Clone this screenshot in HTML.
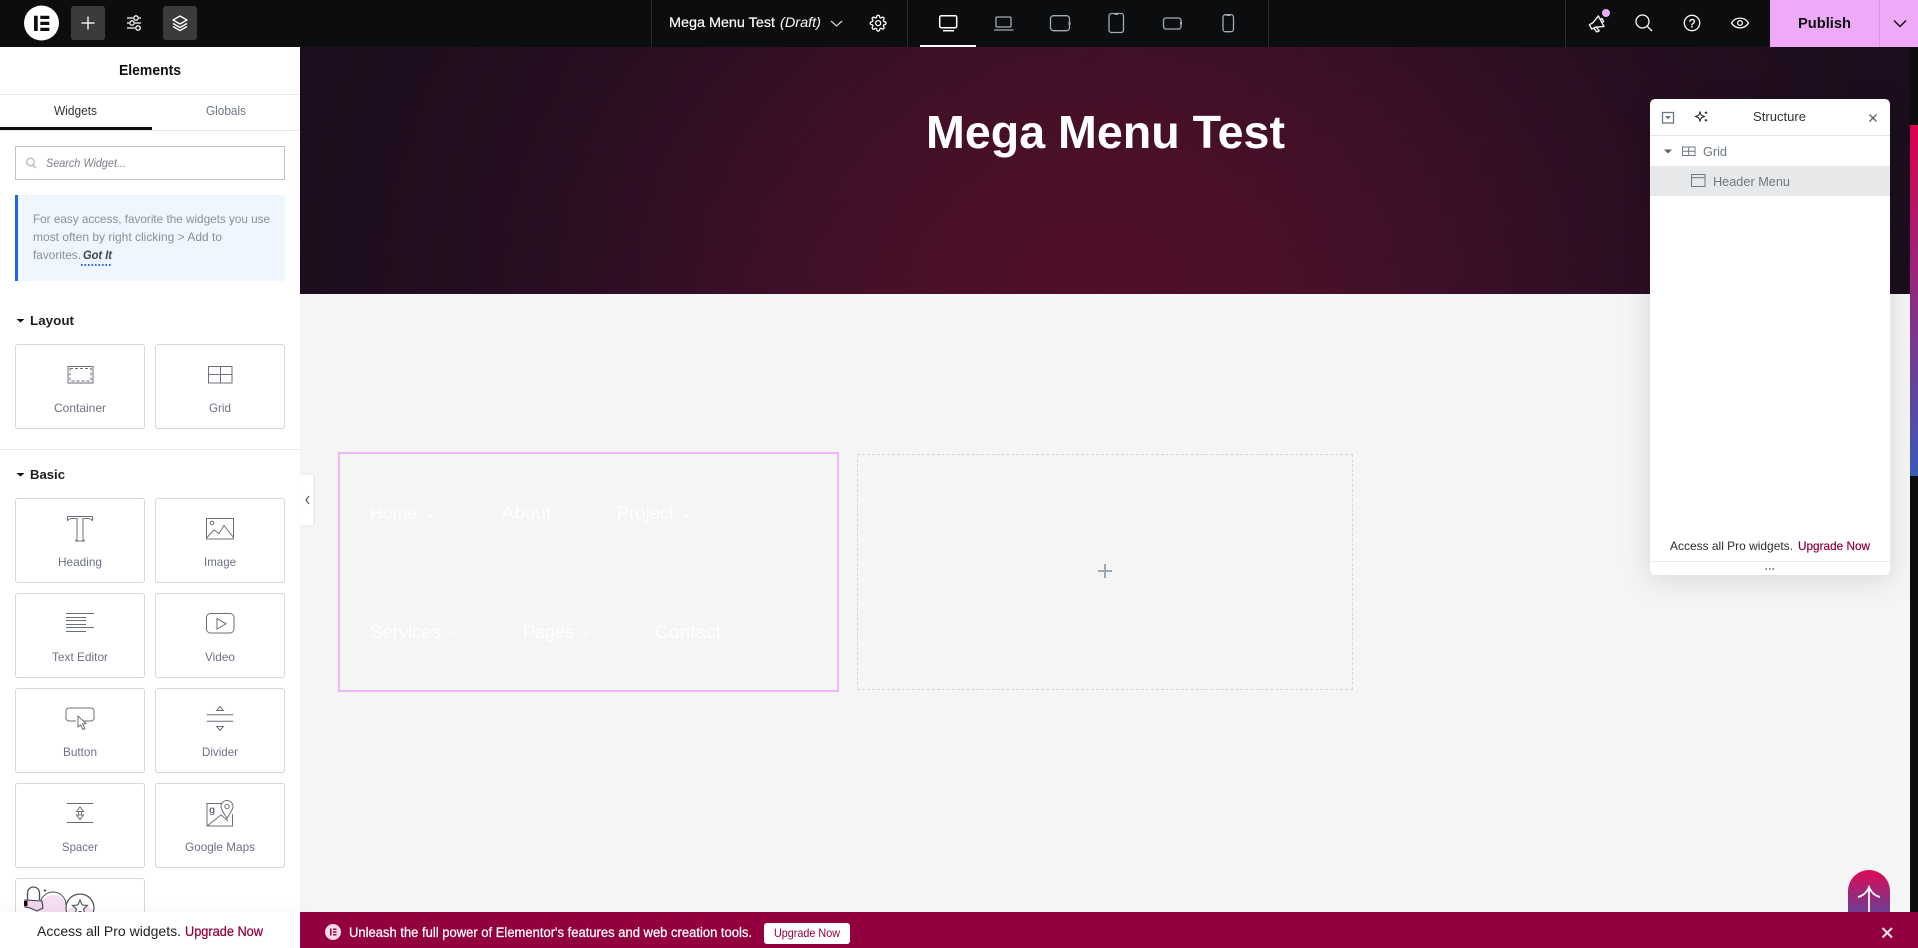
<!DOCTYPE html>
<html lang="en"><head><meta charset="utf-8"><title>Elementor - Mega Menu Test</title>
<style>
*{box-sizing:border-box}
html,body{margin:0;padding:0;width:1918px;height:948px;overflow:hidden;background:#f5f5f5;font-family:"Liberation Sans",sans-serif}
#root{position:relative;width:1918px;height:948px;overflow:hidden;background:#f5f5f5}
.a{position:absolute}
#banner{left:300px;top:47px;width:1610px;height:247px;background:
repeating-linear-gradient(-45deg,rgba(255,255,255,.008) 0 2px,rgba(0,0,0,.02) 2px 5px),
radial-gradient(ellipse 820px 680px at 805px 247px,#500e28 0%,#4a0f28 20%,#3f0f28 38%,#2f0e24 58%,#240d20 76%,#1b0d1d 100%)}
#top{left:0;top:0;width:1918px;height:47px;background:#0c0d0e}
#panel{left:0;top:47px;width:300px;height:901px;background:#fff}
.card{position:absolute;width:130px;height:85px;background:#fff;border:1px solid #d5d8dc;border-radius:3px}
#struct{left:1650px;top:99px;width:240px;height:476px;background:#fff;border-radius:5px;box-shadow:0 4px 30px rgba(0,0,0,.13)}
svg{position:absolute;left:0;top:0}
text{font-family:"Liberation Sans",sans-serif}
</style></head><body><div id="root">
<div class="a" id="banner"></div>
<div class="a" style="left:1910px;top:47px;width:8px;height:901px;background:#0c0d0e"></div>
<div class="a" style="left:1910px;top:125px;width:8px;height:351px;background:linear-gradient(#e0004f,#3a5bb8)"></div>
<div class="a" id="top"></div>
<div class="a" id="panel"></div>
<div class="a" style="left:300px;top:475px;width:13px;height:50px;background:#fff;box-shadow:1px 0 3px rgba(0,0,0,.07)"></div>
<div class="a" style="left:338px;top:452px;width:501px;height:240px;border:2px solid #f0b5fa"></div>
<div class="a" style="left:857px;top:454px;width:496px;height:236px;border:1px dashed #d5d8dc"></div>
<div class="a" style="left:1848px;top:870px;width:42px;height:42px;border-radius:21px 21px 0 0;background:linear-gradient(#dd0a54,#6e3d94)"></div>
<div class="a" style="left:71px;top:6px;width:34px;height:34px;background:#3a3b3d;border-radius:3px"></div>
<div class="a" style="left:163px;top:6px;width:34px;height:34px;background:#3a3b3d;border-radius:3px"></div>
<div class="a" style="left:1770px;top:0;width:148px;height:47px;background:#eeaaf9"></div>
<div class="a" style="left:1879px;top:0;width:1px;height:47px;background:#dc93e8"></div>
<div class="a" style="left:15px;top:146px;width:270px;height:34px;border:1px solid #bfc2c6"></div>
<div class="a" style="left:15px;top:195px;width:270px;height:86px;background:#eff6ff;border-left:3px solid #2563eb;border-radius:0 3px 3px 0"></div>
<div class="card" style="left:15px;top:344px"></div><div class="card" style="left:155px;top:344px"></div>
<div class="card" style="left:15px;top:498px"></div><div class="card" style="left:155px;top:498px"></div>
<div class="card" style="left:15px;top:593px"></div><div class="card" style="left:155px;top:593px"></div>
<div class="card" style="left:15px;top:688px"></div><div class="card" style="left:155px;top:688px"></div>
<div class="card" style="left:15px;top:783px"></div><div class="card" style="left:155px;top:783px"></div>
<div class="card" style="left:15px;top:878px"></div>
<div class="a" style="left:0;top:449px;width:300px;height:1px;background:#e6e8ea"></div>
<div class="a" style="left:0;top:94px;width:300px;height:1px;background:#e6e8ea"></div>
<div class="a" style="left:0;top:130px;width:300px;height:1px;background:#e6e8ea"></div>
<div class="a" style="left:0;top:127px;width:152px;height:3px;background:#0c0d0e"></div>
<div class="a" id="struct"></div>
<div class="a" style="left:1650px;top:135px;width:240px;height:1px;background:#e6e8ea"></div>
<div class="a" style="left:1650px;top:166px;width:240px;height:30px;background:#e6e8ea"></div>
<div class="a" style="left:1650px;top:561px;width:240px;height:1px;background:#e6e8ea"></div>
<div class="a" style="left:920px;top:45px;width:56px;height:2px;background:#fff"></div>
<div class="a" style="left:651px;top:0;width:1px;height:47px;background:#2a2c2e"></div>
<div class="a" style="left:907px;top:0;width:1px;height:47px;background:#2a2c2e"></div>
<div class="a" style="left:1268px;top:0;width:1px;height:47px;background:#2a2c2e"></div>
<div class="a" style="left:1565px;top:0;width:1px;height:47px;background:#2a2c2e"></div>

<svg width="1918" height="948" viewBox="0 0 1918 948" fill="none">
<!-- pro card art (clipped by footer) -->
<g>
<circle cx="53" cy="908" r="13" fill="#f6dff3"/><circle cx="77" cy="918" r="12" fill="#f6dff3"/><circle cx="86" cy="916" r="9" fill="#f6dff3"/>
<path d="M40 905a13 13 0 0 1 26 0" stroke="#4a4f57" stroke-width="1"/>
<circle cx="80" cy="908" r="14" stroke="#4a4f57" stroke-width="1.200"/>
<path d="M80 900l2.200 5 5.300 .4-4 3.500 1.300 5.300-4.800-2.900-4.800 2.900 1.300-5.300-4-3.500 5.300-.4z" stroke="#4a4f57" stroke-width="1.100" fill="#fff"/>
<path d="M27.500 901v-8a6 6 0 0 1 12 0v7" stroke="#4a4f57" stroke-width="1.300"/>
<path d="M25 900l17 1 1 7-6 3-7-3-5-1z" fill="#f2d6ee" stroke="#3a3f45" stroke-width="1.100"/>
<rect x="24" y="901" width="3.500" height="5" fill="#0c0d0e"/>
<path d="M45 889v3M43.500 890.500h3" stroke="#3a3f45" stroke-width=".8"/>
</g>
</svg>
<div class="a" style="left:0;top:912px;width:300px;height:36px;background:#fff;box-shadow:0 -6px 10px rgba(0,0,0,.025)"></div>
<div class="a" style="left:300px;top:912px;width:1618px;height:36px;background:#93003f"></div>
<div class="a" style="left:764px;top:923px;width:86px;height:21px;background:#fff;border-radius:3px"></div>

<svg width="1918" height="948" viewBox="0 0 1918 948" fill="none">
<!-- top left icons -->
<circle cx="41.500" cy="23" r="17.500" fill="#fff"/>
<path d="M34 15.700h3.700V31H34zM40.300 15.700h9V19h-9zM40.300 21.700h9V25h-9zM40.300 27.700h9V31h-9z" fill="#0c0d0e"/>
<path d="M88 16.500v13M81.500 23h13" stroke="#e8e8e8" stroke-width="1.500"/>
<g stroke="#fff" stroke-width="1.300"><path d="M127 18h6M139 18h2M127 23h2M135 23h6M127 28h8M140 28h1"/><circle cx="136" cy="18" r="2.200"/><circle cx="132" cy="23" r="2.200"/><circle cx="138" cy="28" r="2.200"/></g>
<g stroke="#fff" stroke-width="1.300" stroke-linejoin="round"><path d="M180 16l7 4-7 4-7-4zM173 23.500l7 4 7-4M173 26.500l7 4 7-4"/></g>
<!-- top center -->
<text x="669" y="27" font-size="14" fill="#fff" stroke="#fff" stroke-width=".2" textLength="106" lengthAdjust="spacingAndGlyphs">Mega Menu Test</text>
<text x="780" y="27" font-size="14" font-style="italic" fill="#fff" textLength="41" lengthAdjust="spacingAndGlyphs">(Draft)</text>
<path d="M831 21l5.500 5 5.500-5" stroke="#d8d8d8" stroke-width="1.200"/>
<g transform="translate(869.500 14.500) scale(.72)" stroke="#fff" stroke-width="1.800"><circle cx="12" cy="12" r="3.500"/><path d="M19.400 15a1.650 1.650 0 0 0 .33 1.820l.06.06a2 2 0 0 1 0 2.830 2 2 0 0 1-2.830 0l-.06-.06a1.650 1.650 0 0 0-1.820-.33 1.650 1.650 0 0 0-1 1.510V21a2 2 0 0 1-2 2 2 2 0 0 1-2-2v-.09A1.650 1.650 0 0 0 9 19.400a1.650 1.650 0 0 0-1.820.33l-.06.06a2 2 0 0 1-2.830 0 2 2 0 0 1 0-2.830l.06-.06a1.650 1.650 0 0 0 .33-1.820 1.650 1.650 0 0 0-1.510-1H3a2 2 0 0 1-2-2 2 2 0 0 1 2-2h.09A1.650 1.650 0 0 0 4.600 9a1.650 1.650 0 0 0-.33-1.820l-.06-.06a2 2 0 0 1 0-2.830 2 2 0 0 1 2.830 0l.06.06a1.650 1.650 0 0 0 1.820.33H9a1.650 1.650 0 0 0 1-1.510V3a2 2 0 0 1 2-2 2 2 0 0 1 2 2v.09a1.650 1.650 0 0 0 1 1.510 1.650 1.650 0 0 0 1.820-.33l.06-.06a2 2 0 0 1 2.830 0 2 2 0 0 1 0 2.830l-.06.06a1.650 1.650 0 0 0-.33 1.820V9a1.650 1.650 0 0 0 1.510 1H21a2 2 0 0 1 2 2 2 2 0 0 1-2 2h-.09a1.650 1.650 0 0 0-1.510 1z"/></g>
<!-- devices -->
<rect x="939.700" y="15.700" width="17" height="12" rx="1.500" stroke="#fff" stroke-width="1.500"/><path d="M943 30.700h11" stroke="#fff" stroke-width="1.500"/>
<g stroke="#a4abb3" stroke-width="1.300">
<rect x="996" y="17" width="15" height="10" rx="1"/><path d="M994 30h19.500"/>
<rect x="1050.500" y="15.700" width="19" height="15" rx="3"/><path d="M1069.500 22v3" stroke-width="2"/>
<rect x="1109" y="13.500" width="14.500" height="19" rx="2.500"/><path d="M1114.500 14h3.500" stroke-width="2"/>
<rect x="1163.500" y="18" width="17.500" height="11" rx="2.500"/><path d="M1181 22v2.500" stroke-width="2"/>
<rect x="1223" y="14.700" width="10.500" height="17" rx="2.500"/><path d="M1226.500 15h3.500" stroke-width="2"/>
</g>
<!-- top right -->
<g stroke="#fff" stroke-width="1.300" stroke-linejoin="round" transform="rotate(-28 1597 24)"><path d="M1590 21h4l8-3.500v12L1594 26h-4z"/><path d="M1592 26l1.200 5h2.600l-1-5"/><path d="M1602 21.500h2v3.500h-2"/></g>
<circle cx="1606" cy="13" r="4" fill="#eeaaf9"/>
<circle cx="1642.500" cy="21.500" r="6.500" stroke="#fff" stroke-width="1.300"/><path d="M1647.500 26.500l4.500 4.500" stroke="#fff" stroke-width="1.300"/>
<circle cx="1692" cy="23" r="7.700" stroke="#fff" stroke-width="1.300"/>
<text x="1688.700" y="27.500" font-size="12" fill="#fff" stroke="#fff" stroke-width=".3">?</text>
<path d="M1731.500 23c4-6.500 13-6.500 17 0-4 6.500-13 6.500-17 0z" stroke="#fff" stroke-width="1.300"/><circle cx="1740" cy="23" r="2.400" stroke="#fff" stroke-width="1.300"/>
<text x="1798" y="28" font-size="15" font-weight="700" fill="#0c0d0e" textLength="53" lengthAdjust="spacingAndGlyphs">Publish</text>
<path d="M1894 20.500l6 6 6-6" stroke="#0c0d0e" stroke-width="1.400"/>
<!-- panel text -->
<text x="119" y="75" font-size="15" font-weight="700" fill="#0c0d0e" textLength="62" lengthAdjust="spacingAndGlyphs">Elements</text>
<text x="54" y="115" font-size="12.500" fill="#2f3338" textLength="43" lengthAdjust="spacingAndGlyphs">Widgets</text>
<text x="206" y="115" font-size="12.500" fill="#6d7882" textLength="40" lengthAdjust="spacingAndGlyphs">Globals</text>
<circle cx="30.500" cy="162" r="3.800" stroke="#c2c5c9" stroke-width="1.600"/><path d="M33 165l3 3" stroke="#c2c5c9" stroke-width="1.800"/>
<text x="46" y="167" font-size="12" font-style="italic" fill="#7d8187" textLength="80" lengthAdjust="spacingAndGlyphs">Search Widget...</text>
<g font-size="12" fill="#8b9097">
<text x="33" y="223" textLength="237" lengthAdjust="spacingAndGlyphs">For easy access, favorite the widgets you use</text>
<text x="33" y="241" textLength="189" lengthAdjust="spacingAndGlyphs">most often by right clicking &gt; Add to</text>
<text x="33" y="259" textLength="48" lengthAdjust="spacingAndGlyphs">favorites.</text></g>
<text x="83" y="259" font-size="12" font-weight="700" font-style="italic" fill="#3f444b" textLength="29" lengthAdjust="spacingAndGlyphs">Got It</text>
<path d="M81 265h30.500" stroke="#2563eb" stroke-width="2" stroke-dasharray="1.600 1.900"/>
<path d="M16.500 319h8l-4 3.500z" fill="#0c0d0e"/><path d="M16.500 473h8l-4 3.500z" fill="#0c0d0e"/>
<text x="30" y="325" font-size="13" font-weight="700" fill="#1c1f22" textLength="44" lengthAdjust="spacingAndGlyphs">Layout</text>
<text x="30" y="479" font-size="13" font-weight="700" fill="#1c1f22" textLength="35" lengthAdjust="spacingAndGlyphs">Basic</text>
<g font-size="12" fill="#6d7280">
<text x="54" y="412" textLength="52" lengthAdjust="spacingAndGlyphs">Container</text>
<text x="209" y="412" textLength="22" lengthAdjust="spacingAndGlyphs">Grid</text>
<text x="58" y="566" textLength="44" lengthAdjust="spacingAndGlyphs">Heading</text>
<text x="204" y="566" textLength="32" lengthAdjust="spacingAndGlyphs">Image</text>
<text x="52" y="661" textLength="56" lengthAdjust="spacingAndGlyphs">Text Editor</text>
<text x="205" y="661" textLength="30" lengthAdjust="spacingAndGlyphs">Video</text>
<text x="63" y="756" textLength="34" lengthAdjust="spacingAndGlyphs">Button</text>
<text x="202" y="756" textLength="36" lengthAdjust="spacingAndGlyphs">Divider</text>
<text x="62" y="851" textLength="36" lengthAdjust="spacingAndGlyphs">Spacer</text>
<text x="185" y="851" textLength="70" lengthAdjust="spacingAndGlyphs">Google Maps</text>
</g>
<!-- widget icons -->
<g stroke="#6a7078" stroke-width="1">
<rect x="68" y="366.500" width="25" height="16.500"/>
<rect x="70" y="368.500" width="21" height="12.500" stroke-dasharray="3 2"/>
<rect x="208.500" y="366.500" width="23.500" height="16.500"/><path d="M208.500 374.500h23.500M220.500 366.500v16.500"/>
<path d="M67.500 521v-4.500h25v4.500c-.5-1.600-2.500-2.500-5-2.500h-4.500v21.500l2 1h-10l2-1v-21.500h-4.500c-2.500 0-4.500 .9-5 2.500z"/>
<rect x="206.500" y="518.500" width="27" height="20.500"/><circle cx="212" cy="523" r="1.800"/><path d="M206.500 538l7.500-8 5 3.500 5-8 9.500 12"/>
<path d="M66 613.500h28M66 617.500h20M66 620.500h20M66 624.500h20M66 627.500h28M66 631.500h20"/>
<rect x="206.500" y="613.500" width="27.500" height="19.500" rx="4"/><path d="M217 618.500v10.500l9-5.200z"/>
<path d="M76 721h-7c-1.700 0-3-1.300-3-3v-7c0-1.700 1.300-3 3-3h22c1.700 0 3 1.300 3 3v7c0 1.700-1.300 3-3 3h-7"/>
<path d="M78 716v11l2.500-2 2.500 4.500 2-1-2.500-4.500 3.500-.5z" fill="#fff"/>
<path d="M206.700 714.700h26.600M206.700 721.300h26.600M216.700 710.500l3.300-4 3.300 4zM216.700 726.500h6.600l-3.300 4z"/>
<path d="M66.700 803.500h26.600M66.700 822.500h26.600M76.500 811.500l3.500-4.500 3.500 4.500zM76.500 815h7l-3.500 4.500zM78.500 811.500v3.500M81.500 811.500v3.500"/>
<path d="M222.500 803.500h-15.500v22.500h25.500v-12"/>
<path d="M207 826l14-11 7 6"/>
<path d="M227 800.500a6 6 0 0 1 6 6c0 3.500-4 8-6 12-2-4-6-8.500-6-12a6 6 0 0 1 6-6z" fill="#fff"/><circle cx="227" cy="806.500" r="2.200"/>
</g>
<text x="209" y="813" font-size="10" font-weight="700" font-family="Liberation Serif" fill="#6a7078">g</text>
<path d="M309 496l-3 4 3 4" stroke="#555b63" stroke-width="1.200"/>
<!-- footer left -->
<text x="37" y="936" font-size="14" fill="#1c1f22" textLength="144" lengthAdjust="spacingAndGlyphs">Access all Pro widgets.</text>
<text x="185" y="936" font-size="14" fill="#93003f" stroke="#93003f" stroke-width=".25" textLength="78" lengthAdjust="spacingAndGlyphs">Upgrade Now</text>
<!-- banner title -->
<text x="926" y="148" font-size="46" font-weight="700" fill="#fff" textLength="359" lengthAdjust="spacingAndGlyphs">Mega Menu Test</text>
<!-- nav -->
<g font-size="18" fill="#fff">
<text x="370" y="519" textLength="47" lengthAdjust="spacingAndGlyphs">Home</text>
<text x="502" y="519" textLength="49" lengthAdjust="spacingAndGlyphs">About</text>
<text x="617" y="519" textLength="57" lengthAdjust="spacingAndGlyphs">Project</text>
<text x="370" y="638" textLength="71" lengthAdjust="spacingAndGlyphs">Services</text>
<text x="523" y="638" textLength="51" lengthAdjust="spacingAndGlyphs">Pages</text>
<text x="655" y="638" textLength="66" lengthAdjust="spacingAndGlyphs">Contact</text>
</g>
<g stroke="#fff" stroke-width="1"><path d="M427 514l3 3 3-3M684 514l3 3 3-3M449 632l3 3 3-3M583 632l3 3 3-3"/></g>
<path d="M1105 564v14M1098 571h14" stroke="#9da5ae" stroke-width="2"/>
<!-- structure -->
<rect x="1662.500" y="112.500" width="11" height="10.500" stroke="#6d7882" stroke-width="1.300"/><path d="M1665 116h6l-3 3.500z" fill="#6d7882"/>
<path d="M1700 112l1.300 3.200 3.200 1.300-3.200 1.300-1.300 3.200-1.300-3.200-3.200-1.300 3.200-1.300z" stroke="#1c1f22" stroke-width="1"/><path d="M1706 111.500v2.500M1704.700 112.700h2.600M1706 119v2.500M1704.700 120.200h2.600" stroke="#1c1f22"/>
<text x="1753" y="121" font-size="13" fill="#2f3338" textLength="53" lengthAdjust="spacingAndGlyphs">Structure</text>
<path d="M1869.500 114.500l7 7M1876.500 114.500l-7 7" stroke="#5b6169" stroke-width="1.400"/>
<path d="M1664 149.500h8l-4 4z" fill="#5b6169"/>
<rect x="1682.500" y="147" width="12.500" height="8.500" stroke="#6d7882"/><path d="M1682.500 151.200h12.500M1688.700 147v8.500" stroke="#6d7882"/>
<text x="1703" y="156" font-size="12.500" fill="#6d7882" textLength="24" lengthAdjust="spacingAndGlyphs">Grid</text>
<rect x="1691.500" y="174.500" width="13.500" height="12" stroke="#6d7882"/><path d="M1691.500 177.700h13.500" stroke="#6d7882"/>
<text x="1713" y="186" font-size="12.500" fill="#6d7882" textLength="77" lengthAdjust="spacingAndGlyphs">Header Menu</text>
<text x="1670" y="550" font-size="12" fill="#2b2e33" textLength="123" lengthAdjust="spacingAndGlyphs">Access all Pro widgets.</text>
<text x="1798" y="550" font-size="12" fill="#93003f" stroke="#93003f" stroke-width=".2" textLength="72" lengthAdjust="spacingAndGlyphs">Upgrade Now</text>
<path d="M1765.500 569h1.500M1769 569h1.500M1772.500 569h1.500" stroke="#5b6169" stroke-width="1.500"/>
<!-- scroll top arrow -->
<path d="M1869 912v-25M1858 897c5-1 9-5 11-10 2 5 6 9 11 10" stroke="#fff" stroke-width="1.800"/>
<!-- bottom bar -->
<circle cx="333" cy="932" r="8" fill="#f5dbe6"/>
<path d="M330 928.500h1.500v7H330zM333 928.500h3.500v1.400H333zM333 931.300h3.500v1.400H333zM333 934.100h3.500v1.400H333z" fill="#93003f"/>
<text x="349" y="937" font-size="13.500" fill="#fff" stroke="#fff" stroke-width=".25" textLength="403" lengthAdjust="spacingAndGlyphs">Unleash the full power of Elementor's features and web creation tools.</text>
<text x="774" y="937" font-size="12" fill="#93003f" textLength="66" lengthAdjust="spacingAndGlyphs">Upgrade Now</text>
<path d="M1882.500 928l9.500 9.500M1892 928l-9.500 9.500" stroke="#f5dbe6" stroke-width="2.200"/>
</svg>
</div></body></html>
